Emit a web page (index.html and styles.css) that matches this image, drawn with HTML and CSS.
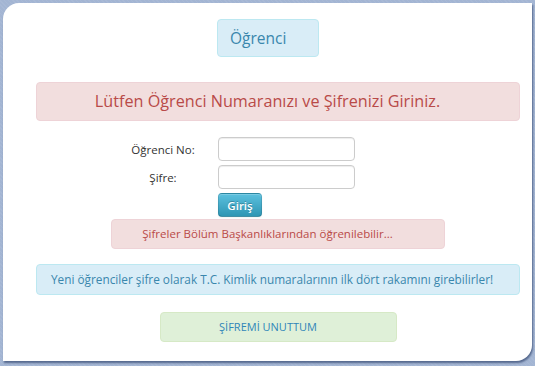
FILE: index.html
```html
<!DOCTYPE html>
<html lang="tr">
<head>
<meta charset="utf-8">
<title>Öğrenci Girişi</title>
<link rel="stylesheet" href="styles.css">
</head>
<body>
<div class="panel">
  <div class="title-box">Öğrenci</div>
  <div class="alert alert-error heading">Lütfen Öğrenci Numaranızı ve Şifrenizi Giriniz.</div>
  <form class="login">
    <label class="lbl" for="no">Öğrenci No:</label>
    <input class="field" id="no" type="text">
    <label class="lbl" for="pw">Şifre:</label>
    <input class="field" id="pw" type="password">
    <span></span>
    <button class="btn" type="button">Giriş</button>
  </form>
  <div class="alert alert-error small-red">Şifreler Bölüm Başkanlıklarından öğrenilebilir...</div>
  <div class="alert alert-info info">Yeni öğrenciler şifre olarak T.C. Kimlik numaralarının ilk dört rakamını girebilirler!</div>
  <div class="alert alert-success forgot"><a href="#">ŞİFREMİ UNUTTUM</a></div>
</div>
</body>
</html>
```

FILE: styles.css
```css
html, body {
  margin: 0;
  padding: 0;
}
body {
  width: 535px;
  height: 366px;
  overflow: hidden;
  background-color: #a3b5d3;
  background-image: repeating-linear-gradient(45deg, rgba(255,255,255,0.06) 0 1px, transparent 1px 3px);
  font-family: "Open Sans", "Liberation Sans", sans-serif;
  padding: 3px 0 0 3px;
  box-sizing: border-box;
}
.panel {
  width: 529px;
  height: 358px;
  background: #fff;
  border-radius: 16px 0 16px 0;
  box-shadow: 1px 2px 2px rgba(60, 80, 120, 0.75);
  display: flex;
  flex-direction: column;
  align-items: flex-start;
  box-sizing: border-box;
  padding: 16px 0 0 33px;
}
.title-box {
  margin-left: 181px;
  width: 102px;
  height: 38px;
  box-sizing: border-box;
  background: #d9edf7;
  border: 1px solid #bce8f1;
  border-radius: 4px;
  color: #3a87ad;
  font-size: 15.5px;
  line-height: 36px;
  padding-left: 12px;
}
.alert {
  box-sizing: border-box;
  border: 1px solid;
  border-radius: 4px;
  text-align: center;
  padding: 0 35px 0 14px;
  white-space: nowrap;
}
.alert-error {
  background: #f2dede;
  border-color: #eed3d7;
  color: #b94a48;
}
.alert-info {
  background: #d9edf7;
  border-color: #bce8f1;
  color: #3a87ad;
}
.alert-success {
  background: #dff0d8;
  border-color: #d6e9c6;
}
.heading {
  margin-top: 25px;
  width: 484px;
  height: 39px;
  font-size: 16.2px;
  line-height: 37px;
}
.login {
  margin: 16px 0 0 72px;
  display: grid;
  grid-template-columns: 110px 137px;
  row-gap: 4px;
  align-items: center;
}
.lbl {
  font-size: 11.5px;
  color: #333;
  text-align: center;
}
.field {
  width: 137px;
  height: 24px;
  box-sizing: border-box;
  border: 1px solid #ccc;
  border-radius: 4px;
  box-shadow: inset 0 1px 1px rgba(0,0,0,0.075);
  margin: 0;
  padding: 2px 6px;
  font: 12px "Open Sans", sans-serif;
  background: #fff;
}
.btn {
  width: 44px;
  height: 24px;
  margin: 0;
  padding: 0;
  border: 1px solid #2a85a0;
  border-color: rgba(0,0,0,0.1) rgba(0,0,0,0.1) rgba(0,0,0,0.25);
  border-radius: 4px;
  background: linear-gradient(#5bc0de, #2f96b4);
  color: #fff;
  text-shadow: 0 -1px 0 rgba(0,0,0,0.25);
  font: 600 11.5px "Open Sans", sans-serif;
  box-shadow: inset 0 1px 0 rgba(255,255,255,0.2), 0 1px 2px rgba(0,0,0,0.05);
}
.small-red {
  margin: 2px 0 0 75px;
  width: 334px;
  height: 30px;
  font-size: 11.5px;
  line-height: 28px;
}
.info {
  margin-top: 15px;
  width: 484px;
  height: 31px;
  font-size: 11.8px;
  line-height: 29px;
}
.forgot {
  margin: 17px 0 0 124px;
  width: 237px;
  height: 30px;
  font-size: 11px;
  line-height: 28px;
}
.forgot a {
  color: #2f86b8;
  text-decoration: none;
}
```
